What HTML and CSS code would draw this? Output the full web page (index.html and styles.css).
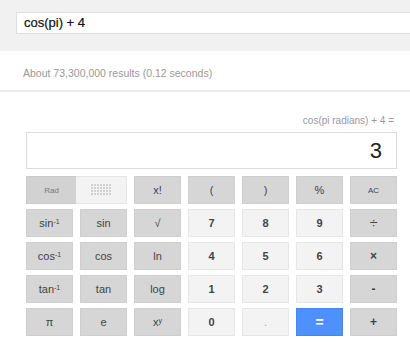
FILE: index.html
```html
<!DOCTYPE html>
<html lang="en">
<head>
    <meta charset="UTF-8">
    <meta name="viewport" content="width=device-width, initial-scale=1.0">
    <title>cos(pi) + 4</title>
    <link rel="stylesheet" href="styles.css">
</head>
<body>
    <div class="top-bar">
        <div class="search-box">cos(pi) + 4</div>
    </div>
    <div class="result-stats">About 73,300,000 results (0.12 seconds)</div>

    <div class="calc">
        <div class="equation">cos(pi radians) + 4 =</div>
        <div class="display">3</div>
        <div class="keys">
            <div class="key toggle">
                <span class="rad">Rad</span>
                <span class="deg"><span class="dots"></span></span>
            </div>
            <div class="key func">x!</div>
            <div class="key func">(</div>
            <div class="key func">)</div>
            <div class="key func">%</div>
            <div class="key func small">AC</div>

            <div class="key func">sin<sup>-1</sup></div>
            <div class="key func">sin</div>
            <div class="key func">&radic;</div>
            <div class="key num">7</div>
            <div class="key num">8</div>
            <div class="key num">9</div>
            <div class="key func big">&divide;</div>

            <div class="key func">cos<sup>-1</sup></div>
            <div class="key func">cos</div>
            <div class="key func">ln</div>
            <div class="key num">4</div>
            <div class="key num">5</div>
            <div class="key num">6</div>
            <div class="key func bold">&times;</div>

            <div class="key func">tan<sup>-1</sup></div>
            <div class="key func">tan</div>
            <div class="key func">log</div>
            <div class="key num">1</div>
            <div class="key num">2</div>
            <div class="key num">3</div>
            <div class="key func bold">-</div>

            <div class="key func">&pi;</div>
            <div class="key func">e</div>
            <div class="key func">x<sup>y</sup></div>
            <div class="key num">0</div>
            <div class="key num dot">.</div>
            <div class="key equals">=</div>
            <div class="key func bold">+</div>
        </div>
    </div>
</body>
</html>
```

FILE: styles.css
```css
body {
    font-family: "Liberation Sans", Arial, sans-serif;
    margin: 0;
    padding: 0;
    background-color: #fff;
    overflow: hidden;
}

.top-bar {
    height: 51px;
    box-sizing: border-box;
    padding: 12px 0 0 16px;
    background-color: #f1f1f1;
    overflow: hidden;
}

.search-box {
    height: 22px;
    width: 420px;
    box-sizing: border-box;
    padding-left: 7px;
    border: 1px solid #dedede;
    background-color: #fff;
    font-size: 13px;
    line-height: 20px;
    color: #111;
    -webkit-text-stroke: 0.2px #111;
}

.result-stats {
    height: 41px;
    box-sizing: border-box;
    padding: 16px 0 0 23px;
    border-bottom: 2px solid #ececec;
    font-size: 10.5px;
    color: #999;
}

.calc {
    width: 371px;
    padding: 23px 0 0 26px;
}

.equation {
    text-align: right;
    padding-right: 3px;
    font-size: 10px;
    line-height: 12px;
    color: #999;
}

.display {
    height: 37px;
    margin-top: 5px;
    box-sizing: border-box;
    padding-right: 14px;
    border: 1px solid #ddd;
    text-align: right;
    font-size: 22px;
    line-height: 36px;
    color: #222;
}

.keys {
    display: grid;
    grid-template-columns: repeat(7, 47px);
    grid-auto-rows: 28px;
    column-gap: 7px;
    row-gap: 5px;
    margin-top: 7px;
}

.key {
    display: flex;
    align-items: center;
    justify-content: center;
    box-sizing: border-box;
    font-size: 11px;
    color: #444;
}

.key sup {
    font-size: 7px;
    line-height: 0;
    position: relative;
    top: -1px;
}

.func {
    background-color: #d6d6d6;
    border: 1px solid #cfcfcf;
}

.num {
    background-color: #f3f3f3;
    border: 1px solid #e6e6e6;
    font-weight: bold;
}

.small {
    font-size: 8px;
}

.bold {
    font-weight: bold;
    font-size: 12px;
}

.big {
    font-size: 14px;
}

.dot {
    color: #999;
    font-weight: normal;
}

.equals {
    background-color: #4d90fe;
    border: 1px solid #4787ed;
    color: #fff;
    font-weight: bold;
    font-size: 14px;
}

.toggle {
    grid-column: span 2;
    align-items: stretch;
}

.rad {
    width: 49px;
    display: flex;
    align-items: center;
    justify-content: center;
    background-color: #d2d2d2;
    border: 1px solid #cbcbcb;
    border-right: none;
    font-size: 8px;
    color: #777;
}

.deg {
    flex: 1;
    display: flex;
    align-items: center;
    justify-content: center;
    background-color: #f3f3f3;
    border: 1px solid #e6e6e6;
    border-left: none;
}

.dots {
    width: 21px;
    height: 12px;
    background-image: radial-gradient(circle at 1px 1px, #cfcfcf 0.7px, transparent 0.9px);
    background-size: 3px 3px;
}
```
